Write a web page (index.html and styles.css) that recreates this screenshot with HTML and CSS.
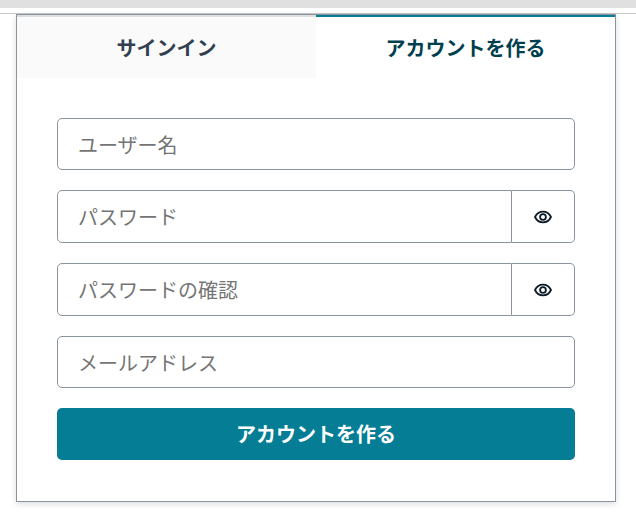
FILE: index.html
```html
<!DOCTYPE html>
<html lang="ja">
<head>
    <meta charset="UTF-8">
    <meta name="viewport" content="width=device-width, initial-scale=1.0">
    <title>アカウントを作る</title>
    <link rel="stylesheet" href="styles.css">
</head>
<body>
    <div class="topbar"></div>

    <main class="auth">
        <div class="card">
            <div class="tabs" role="tablist">
                <button class="tab" type="button" role="tab" aria-selected="false">サインイン</button>
                <button class="tab tab-active" type="button" role="tab" aria-selected="true">アカウントを作る</button>
            </div>

            <form class="form">
                <input class="field" type="text" name="username" placeholder="ユーザー名" aria-label="ユーザー名">

                <div class="password">
                    <input class="field" type="password" name="password" placeholder="パスワード" aria-label="パスワード">
                    <button class="toggle" type="button" aria-label="パスワードを表示">
                        <svg class="eye" viewBox="0 0 20 20" aria-hidden="true">
                            <path d="M2 10C3.6 6.7 6.5 4.6 10 4.6s6.400 2.100 8 5.400c-1.600 3.300-4.500 5.400-8 5.400S3.600 13.300 2 10z"/>
                            <circle cx="10" cy="10" r="2.900"/>
                        </svg>
                    </button>
                </div>

                <div class="password">
                    <input class="field" type="password" name="confirm" placeholder="パスワードの確認" aria-label="パスワードの確認">
                    <button class="toggle" type="button" aria-label="パスワードを表示">
                        <svg class="eye" viewBox="0 0 20 20" aria-hidden="true">
                            <path d="M2 10C3.6 6.7 6.5 4.6 10 4.6s6.400 2.100 8 5.400c-1.600 3.300-4.500 5.400-8 5.400S3.600 13.300 2 10z"/>
                            <circle cx="10" cy="10" r="2.900"/>
                        </svg>
                    </button>
                </div>

                <input class="field" type="email" name="email" placeholder="メールアドレス" aria-label="メールアドレス">

                <button class="submit" type="submit">アカウントを作る</button>
            </form>
        </div>
    </main>
</body>
</html>
```

FILE: styles.css
```css
* {
    margin: 0;
    padding: 0;
    box-sizing: border-box;
}

body {
    font-family: "Noto Sans CJK JP", sans-serif;
    font-size: 20px;
    line-height: 30px;
    background: #fff;
    color: #304050;
}

button,
input {
    font: inherit;
}

button {
    cursor: pointer;
}

.topbar {
    height: 14px;
    border-top: 8px solid #e0e0e0;
    border-bottom: 1px solid #c9c9cb;
}

.auth {
    padding: 0 20px 16px 16px;
}

.card {
    background: #fff;
    border: 1px solid #89949f;
    box-shadow: 0 2px 6px rgba(13, 26, 38, 0.15);
}

.tabs {
    display: grid;
    grid-template-columns: 1fr 1fr;
}

.tab {
    padding: 16px 20px 15px;
    border: none;
    border-top: 2px solid #dcdee0;
    background: #fafafa;
    color: #304050;
    font-weight: 700;
}

.tab-active {
    border-top-color: #047d95;
    background: #fff;
    color: #003f4f;
}

.form {
    display: grid;
    gap: 20px;
    padding: 40px 40px 41px;
}

.field {
    width: 100%;
    height: 52px;
    padding: 0 20px;
    border: 1px solid #89949f;
    border-radius: 5px;
    background: #fff;
    color: #0d1a26;
}

.field::placeholder {
    color: #757575;
    opacity: 1;
}

/* input and show button share one outline */
.password {
    display: flex;
    height: 53px;
}

.password .field {
    flex: 1;
    min-width: 0;
    height: auto;
    border-radius: 5px 0 0 5px;
}

.toggle {
    display: flex;
    align-items: center;
    justify-content: center;
    width: 63px;
    border: 1px solid #89949f;
    border-left: none;
    border-radius: 0 5px 5px 0;
    background: #fff;
}

.eye {
    width: 20px;
    height: 20px;
    fill: none;
    stroke: #0d1a26;
    stroke-width: 1.8;
    stroke-linejoin: round;
}

.submit {
    height: 52px;
    border: none;
    border-radius: 5px;
    background: #047d95;
    color: #fff;
    font-weight: 700;
}
```
